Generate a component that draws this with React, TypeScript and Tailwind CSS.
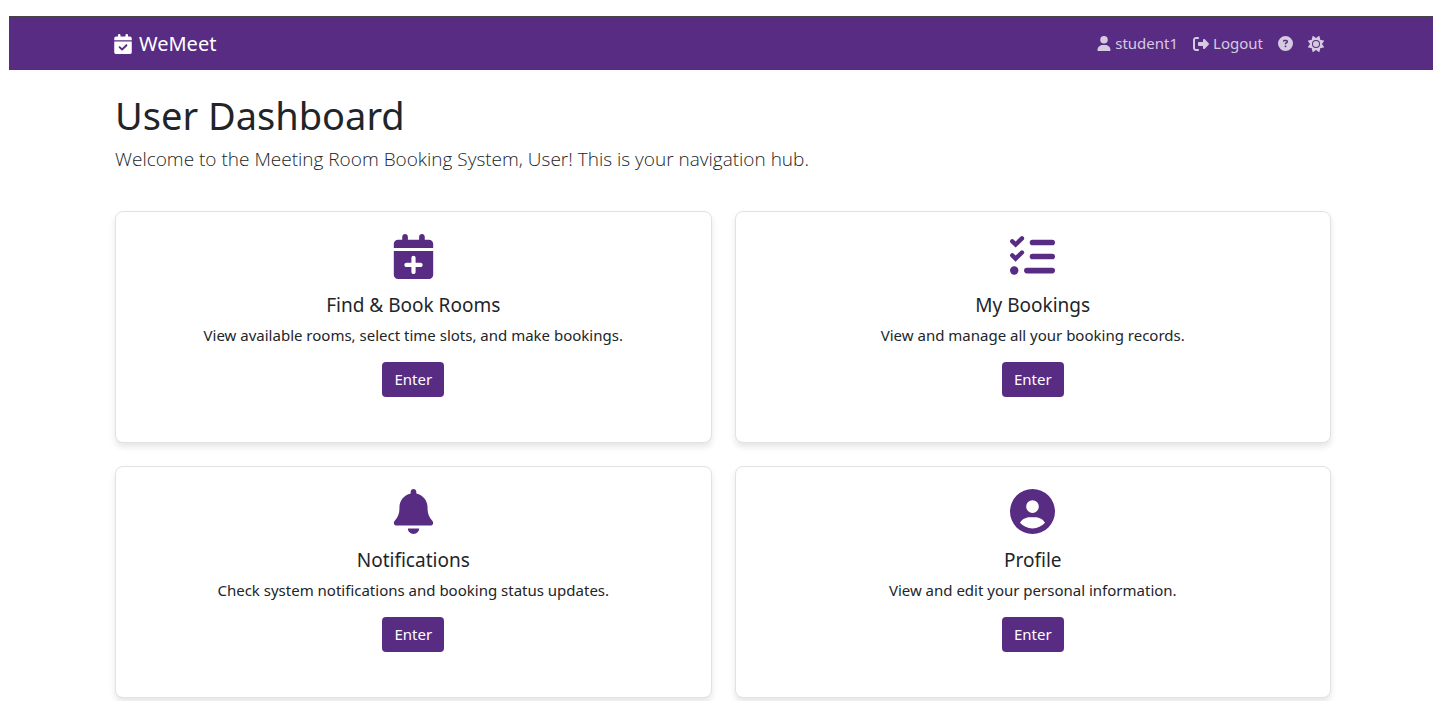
import type { ComponentType, ReactNode } from "react";
import {
  FaBell,
  FaCalendarCheck,
  FaCalendarPlus,
  FaCircleQuestion,
  FaCircleUser,
  FaRightFromBracket,
  FaSun,
  FaUser,
} from "react-icons/fa6";

type Tile = {
  icon: ComponentType<{ className?: string }>;
  title: string;
  text: string;
};

function ChecklistIcon({ className }: { className?: string }) {
  return (
    <svg
      viewBox="0 0 512 512"
      className={className}
      fill="none"
      stroke="currentColor"
      strokeLinecap="round"
      aria-hidden="true"
    >
      <path strokeWidth="64" d="M256 96H480M256 256H480M192 416H480" />
      <path
        strokeWidth="50"
        strokeLinejoin="miter"
        d="M26 84L64 120L136 50M26 244L64 280L136 210"
      />
      <circle cx="48" cy="416" r="48" fill="currentColor" stroke="none" />
    </svg>
  );
}

const tiles: Tile[] = [
  {
    icon: FaCalendarPlus,
    title: "Find & Book Rooms",
    text: "View available rooms, select time slots, and make bookings.",
  },
  {
    icon: ChecklistIcon,
    title: "My Bookings",
    text: "View and manage all your booking records.",
  },
  {
    icon: FaBell,
    title: "Notifications",
    text: "Check system notifications and booking status updates.",
  },
  {
    icon: FaCircleUser,
    title: "Profile",
    text: "View and edit your personal information.",
  },
];

function NavLink({ label, children }: { label?: string; children: ReactNode }) {
  return (
    <a href="#" aria-label={label} className="flex items-center gap-1 hover:text-white">
      {children}
    </a>
  );
}

function NavBar() {
  return (
    <header className="flex h-[54px] items-center justify-between border-t border-[#454545] bg-[#582c83] pr-[109px] pl-[104px]">
      <a href="#" className="flex items-center gap-[6px] text-[20px] text-white">
        <FaCalendarCheck className="size-5" />
        WeMeet
      </a>
      <nav className="flex items-center gap-[15px] text-[15px] text-[#d5cae0]">
        <NavLink>
          <FaUser className="h-[15px] w-[14px]" />
          student1
        </NavLink>
        <NavLink>
          <FaRightFromBracket className="size-4" />
          Logout
        </NavLink>
        <NavLink label="Help">
          <FaCircleQuestion className="size-[15px]" />
        </NavLink>
        <button type="button" aria-label="Toggle theme" className="hover:text-white">
          <FaSun className="size-4" />
        </button>
      </nav>
    </header>
  );
}

function TileCard({ icon: Icon, title, text }: Tile) {
  return (
    <section className="flex flex-col items-center rounded-lg border border-[#e2e2e3] bg-white px-4 pt-[22px] pb-[45px] text-center shadow-[0_4px_6px_rgba(0,0,0,0.1)]">
      <Icon className="size-[45px] text-[#582c83]" />
      <h2 className="mt-3 text-[19px] leading-7">{title}</h2>
      <p className="mt-1 text-[15px] leading-6">{text}</p>
      <a
        href="#"
        className="mt-[15px] rounded-[4px] bg-[#582c83] px-3 py-[6px] text-[15px] leading-[23px] text-white hover:bg-[#4a2470]"
      >
        Enter
      </a>
    </section>
  );
}

export default function App() {
  return (
    <div className="overflow-hidden bg-white pt-4 pr-[6px] pb-[3px] pl-[9px] font-['Noto_Sans','Open_Sans',sans-serif] text-[#212529]">
      <NavBar />
      <main className="pt-[22px] pr-[102px] pl-[106px]">
        <h1 className="text-[38px] leading-[46px]">User Dashboard</h1>
        <p className="mt-[6px] font-['Open_Sans','Noto_Sans',sans-serif] text-[19px] leading-[30px] font-light">
          Welcome to the Meeting Room Booking System, User! This is your navigation hub.
        </p>
        <div className="mt-[37px] grid grid-cols-2 gap-[23px]">
          {tiles.map((tile) => (
            <TileCard key={tile.title} {...tile} />
          ))}
        </div>
      </main>
    </div>
  );
}
